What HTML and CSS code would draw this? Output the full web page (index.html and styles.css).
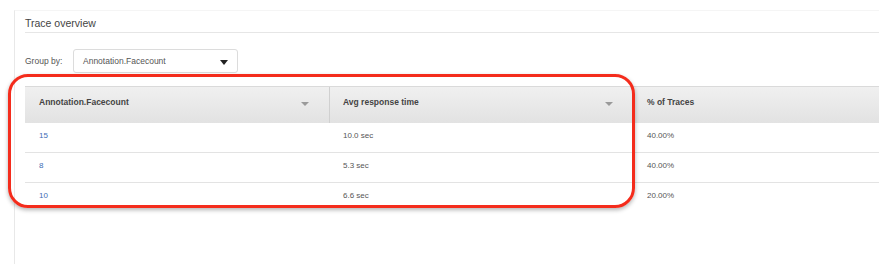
FILE: index.html
```html
<!DOCTYPE html>
<html>
<head>
<meta charset="utf-8">
<link rel="stylesheet" href="styles.css">
</head>
<body>
<div class="panel">
  <div class="title">Trace overview</div>
  <div class="groupby">
    <span class="gb-label">Group by:</span>
    <div class="select">
      <span>Annotation.Facecount</span>
      <span class="select-caret"></span>
    </div>
  </div>
  <div class="table">
    <div class="row head">
      <div class="cell c1"><span>Annotation.Facecount</span><span class="sort"></span></div>
      <div class="cell c2"><span>Avg response time</span><span class="sort"></span></div>
      <div class="cell c3"><span>% of Traces</span></div>
    </div>
    <div class="row">
      <div class="cell c1 link">15</div>
      <div class="cell c2">10.0 sec</div>
      <div class="cell c3">40.00%</div>
    </div>
    <div class="row">
      <div class="cell c1 link">8</div>
      <div class="cell c2">5.3 sec</div>
      <div class="cell c3">40.00%</div>
    </div>
    <div class="row last">
      <div class="cell c1 link">10</div>
      <div class="cell c2">6.6 sec</div>
      <div class="cell c3">20.00%</div>
    </div>
  </div>
  <div class="highlight"></div>
</div>
</body>
</html>
```
FILE: styles.css
```css
html, body {
  margin: 0;
  padding: 0;
  background: #fff;
  font-family: "Liberation Sans", Arial, sans-serif;
  color: #555;
}
body {
  width: 894px;
  height: 264px;
  overflow: hidden;
}
.panel {
  position: relative;
  margin: 10px 0 0 14px;
  width: 865px;
  height: 254px;
  border-left: 1px solid #e8e8e8;
  border-top: 1px solid #f5f5f5;
  box-sizing: border-box;
  padding-left: 10px;
}
.title {
  height: 22px;
  border-bottom: 1px solid #e6e6e6;
  font-size: 10.5px;
  line-height: 22px;
  color: #444;
  box-sizing: border-box;
  padding-top: 1px;
}
.groupby {
  display: flex;
  align-items: center;
  margin-top: 16px;
  height: 24px;
}
.gb-label {
  font-size: 8.5px;
  color: #555;
  width: 48px;
}
.select {
  width: 165px;
  height: 24px;
  box-sizing: border-box;
  border: 1px solid #dcdcdc;
  border-radius: 3px;
  display: flex;
  align-items: center;
  justify-content: space-between;
  padding: 0 9px 0 9px;
  font-size: 8.5px;
  color: #555;
}
.select-caret {
  width: 0;
  height: 0;
  border-left: 4.5px solid transparent;
  border-right: 4.5px solid transparent;
  border-top: 5px solid #222;
  margin-top: 2px;
}
.table {
  margin-top: 13px;
  width: 854px;
}
.row {
  display: grid;
  grid-template-columns: 305px 304px 1fr;
  height: 30px;
  border-bottom: 1px solid #e3e3e3;
  box-sizing: border-box;
}
.row.last {
  border-bottom: none;
}
.row.head {
  height: 37px;
  background: linear-gradient(#f0f0f0, #e2e2e2);
  border-top: 1px solid #dadada;
  border-bottom: none;
}
.cell {
  display: flex;
  align-items: center;
  justify-content: space-between;
  padding: 0 20px 5px 14px;
  font-size: 8px;
  color: #555;
}
.head .cell {
  font-weight: bold;
  font-size: 8.5px;
  color: #444;
  padding-bottom: 6px;
}
.head .c1, .head .c2 {
  border-right: 1px solid #d0d0d0;
}
.cell.c2 { padding-left: 13px; }
.cell.c3 { padding-left: 13px; }
.link {
  color: #3e6db5;
}
.sort {
  width: 0;
  height: 0;
  border-left: 4px solid transparent;
  border-right: 4px solid transparent;
  border-top: 4px solid #9a9a9a;
  margin-top: 3px;
}
.highlight {
  position: absolute;
  left: -7px;
  top: 63px;
  width: 627px;
  height: 134px;
  box-sizing: border-box;
  border: 3.5px solid #f42c1c;
  border-radius: 20px;
  box-shadow: 0 2px 4px rgba(0, 0, 0, 0.3);
}
```
